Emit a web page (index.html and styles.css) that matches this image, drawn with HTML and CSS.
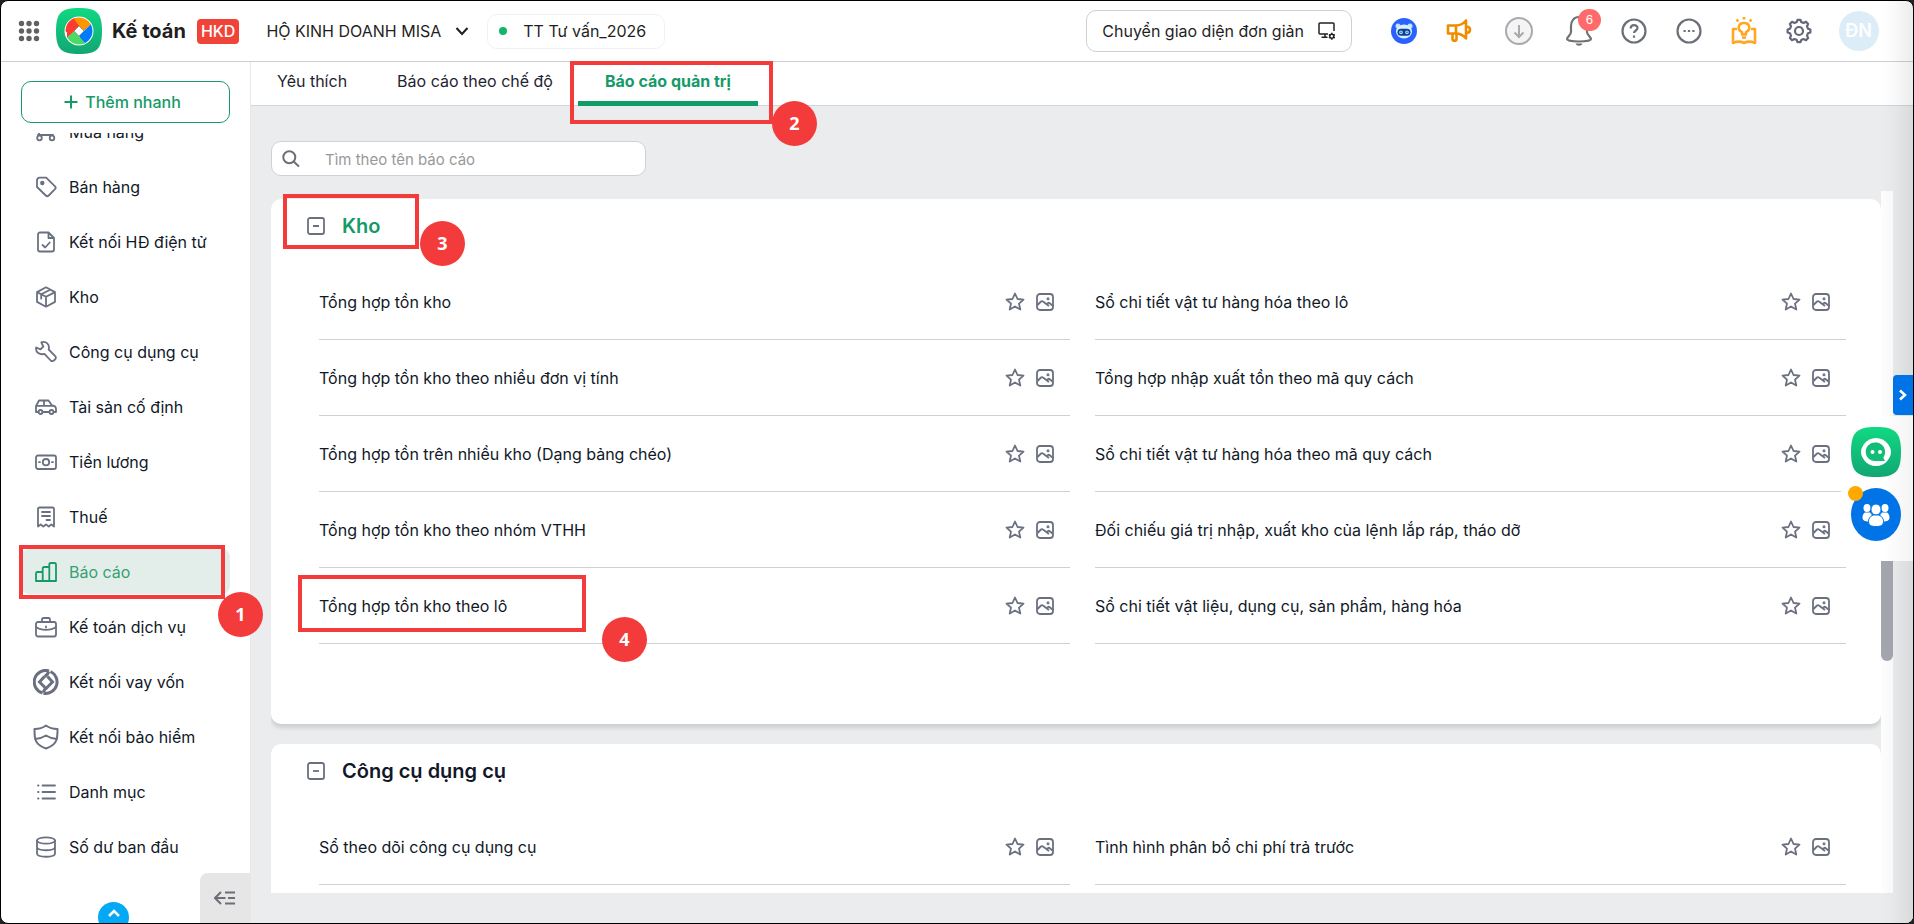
FILE: index.html
```html
<!DOCTYPE html>
<html lang="vi">

<head>
    <meta charset="utf-8">
    <meta name="viewport" content="width=device-width, initial-scale=1.0">
    <title>Báo cáo quản trị</title>
    <link rel="stylesheet" href="styles.css">
</head>

<body>

    <svg class="sprite" aria-hidden="true">
        <symbol id="i-star" viewBox="0 0 20 20">
            <path d="M10 1.500l2.500 5.500 6 .6-4.500 4 1.300 5.900-5.300-3-5.300 3L6 11.600l-4.500-4 6-.6z" />
        </symbol>
        <symbol id="i-image" viewBox="0 0 20 20">
            <rect x="2" y="2" width="16" height="16" rx="3" />
            <path d="M2.500 13l3.500-3.500c.7-.6 1.300-.6 2 0l6 4.500M11.500 12.200l1.300-1c.6-.5 1.300-.5 1.900 0l2.800 2.300" />
            <circle cx="13" cy="6.800" r=".6" />
        </symbol>
        <symbol id="i-minus" viewBox="0 0 18 18">
            <rect x="1" y="1" width="16" height="16" rx="2" />
            <path d="M6 9h6" />
        </symbol>
    </svg>

    <div class="app">
        <header class="topbar">
            <button class="apps" aria-label="Ứng dụng">
                <svg width="22" height="22" viewBox="0 0 22 22" fill="#616161">
                    <circle cx="3.500" cy="3.500" r="2.700" /><circle cx="11" cy="3.500" r="2.700" /><circle cx="18.500" cy="3.500" r="2.700" />
                    <circle cx="3.500" cy="11" r="2.700" /><circle cx="11" cy="11" r="2.700" /><circle cx="18.500" cy="11" r="2.700" />
                    <circle cx="3.500" cy="18.500" r="2.700" /><circle cx="11" cy="18.500" r="2.700" /><circle cx="18.500" cy="18.500" r="2.700" />
                </svg>
            </button>
            <svg class="logo" viewBox="0 0 46 46">
                <defs>
                    <linearGradient id="green" x1="0" y1="0" x2="0" y2="1">
                        <stop offset="0" stop-color="#10d982" />
                        <stop offset="1" stop-color="#12a673" />
                    </linearGradient>
                    <clipPath id="disc"><circle cx="23" cy="23" r="13.500" /></clipPath>
                </defs>
                <path d="M23 0c17 0 23 4 23 23s-6 23-23 23S0 42 0 23 6 0 23 0z" fill="url(#green)" />
                <circle cx="23" cy="23" r="14.500" fill="#fff" />
                <g clip-path="url(#disc)">
                    <path d="M23 18L11 30V8h6l6.500 6z" fill="#ff3b30" />
                    <path d="M28 23L14 9V5h26v6z" fill="#ff9500" />
                    <path d="M23 28L36 15h8v24H30l-4.500-6z" fill="#007aff" />
                    <path d="M18 23l14 15v5H6V34z" fill="#4cd964" />
                    <path d="M23 18l-9 9-5-4V8h7z" fill="#ff3b30" />
                </g>
                <path d="M23 18l5 5-5 5-5-5z" fill="#fff" stroke="#476" stroke-width=".6" />
            </svg>
            <strong class="product">Kế toán</strong>
            <span class="badge">HKD</span>
            <button class="company">
                HỘ KINH DOANH MISA
                <svg width="14" height="14" viewBox="0 0 14 14" fill="none" stroke="#1f1f1f" stroke-width="2"><path d="M1.500 4l5.500 6 5.500-6" /></svg>
            </button>
            <button class="database"><span class="dot"></span>TT Tư vấn_2026</button>

            <button class="switch">
                Chuyển giao diện đơn giản
                <svg width="18" height="18" viewBox="0 0 18 18" fill="none" stroke="#222" stroke-width="1.500">
                    <path d="M10 12H2c-.8 0-1-.4-1-1V2c0-.7.3-1 1-1h13c.7 0 1 .3 1 1v7M7 12v3M3.500 15.300h6" />
                    <circle cx="13.800" cy="14.200" r="2" />
                    <path d="M13.800 10.800v1.200M13.800 16.400v1.400M10.900 12.500l1 .6M15.700 15.300l1.100.6M10.900 15.900l1-.6M15.700 13.100l1.100-.6" />
                </svg>
            </button>

            <nav class="tools">
                <button aria-label="Trợ lý">
                    <svg width="26" height="26" viewBox="0 0 26 26">
                        <circle cx="13" cy="13" r="13" fill="#2962ff" />
                        <circle cx="7" cy="8" r="2.500" fill="#bfe6fb" /><circle cx="19" cy="8" r="2.500" fill="#bfe6fb" />
                        <ellipse cx="13" cy="13.500" rx="8" ry="7" fill="#d5f0fd" />
                        <rect x="6.500" y="10.800" width="13" height="7" rx="3.500" fill="#0f3f91" />
                        <circle cx="10" cy="14.300" r="1.300" fill="none" stroke="#9edcfa" stroke-width="1.200" /><circle cx="16" cy="14.300" r="1.300" fill="none" stroke="#9edcfa" stroke-width="1.200" />
                    </svg>
                </button>
                <button aria-label="Thông báo sản phẩm">
                    <svg width="26" height="26" viewBox="0 0 26 26" fill="none" stroke="#f08c00" stroke-width="2.600" stroke-linejoin="round">
                        <path d="M2 7.500h8v8H2zM10 7.500c4.500 0 7.500-2 10-5v18c-2.500-3-5.500-5-10-5M6.500 15.500v5.800c0 2 4 2 4 0v-5.800M21 8.500c4 .5 4 6 0 6.500" />
                    </svg>
                </button>
                <button class="wide" aria-label="Tải xuống">
                    <svg width="28" height="28" viewBox="0 0 28 28" fill="none" stroke="#aaa" stroke-width="2">
                        <circle cx="14" cy="14" r="13" fill="#f4f4f6" /><path d="M14 8v12M9.500 15.500L14 20l4.500-4.500" />
                    </svg>
                </button>
                <button class="bell" aria-label="Thông báo">
                    <svg width="28" height="32" viewBox="0 0 28 32" fill="none" stroke="#717171" stroke-width="2.200" stroke-linejoin="round">
                        <path d="M14 2C8.500 2 6 6.500 6 11v6c0 3-4 5-4 7 0 1.500 5 2.500 12 2.500S26 25.500 26 24c0-2-4-4-4-7v-6c0-4.500-2.500-9-8-9z" />
                        <path d="M10.500 28.500h7c-1 3-6 3-7 0z" fill="#717171" stroke="none" />
                    </svg>
                    <span class="count">6</span>
                </button>
                <button aria-label="Trợ giúp">
                    <svg width="26" height="26" viewBox="0 0 26 26" fill="none" stroke="#6b6f78" stroke-width="2.200">
                        <circle cx="13" cy="13" r="11.500" /><path d="M9.700 10.500c0-4.500 6.800-4.300 6.800-.4 0 2.400-3.500 2.400-3.500 5M13 17.500v2.300" />
                    </svg>
                </button>
                <button aria-label="Thêm">
                    <svg width="26" height="26" viewBox="0 0 26 26" fill="none" stroke="#6b6f78" stroke-width="2.200">
                        <circle cx="13" cy="13" r="11.500" /><path d="M7.500 13h2.200M11.900 13h2.200M16.300 13h2.200" />
                    </svg>
                </button>
                <button aria-label="Hướng dẫn">
                    <svg width="26" height="30" viewBox="0 0 26 30" fill="none" stroke="#ffa722" stroke-width="2.600" stroke-linejoin="round">
                        <path d="M6 13H2v14c4-1.800 7.500-1.800 11 0 3.500-1.800 7-1.800 11 0V13h-4" />
                        <path d="M11 18.500v-2.300c-5.500-3-3.500-9.200 2-9.200s7.500 6.200 2 9.200v2.300zM11 21.500h4M13 1v2.500M5.500 3.500l1.800 1.800M20.500 3.500l-1.800 1.800" />
                    </svg>
                </button>
                <button aria-label="Thiết lập">
                    <svg width="26" height="26" viewBox="0 0 26 26" fill="none" stroke="#63677a" stroke-width="2.200" stroke-linejoin="round">
                        <path d="M10.800 4L11.500 1.800h3L15.200 4l2.300 1 2.500-1.200 2.100 2.200-1.100 2.300 1 2.400 2.400.8v3l-2.400.8-1 2.300 1.100 2.400-2.100 2.200-2.500-1.200-2.300 1-.7 2.200h-3l-.7-2.200-2.300-1L6 22.200 3.900 20 5 17.600l-1-2.300-2.400-.8v-3l2.400-.8 1-2.400L3.900 6 6 3.800 8.500 5z" />
                        <circle cx="13" cy="13" r="4" />
                    </svg>
                </button>
                <button class="wide" aria-label="Tài khoản"><span class="avatar">ĐN</span></button>
            </nav>
        </header>

        <div class="body">
            <aside class="sidebar">
                <button class="quick_add">
                    <svg width="14" height="14" viewBox="0 0 14 14" fill="none" stroke="#159a68" stroke-width="2"><path d="M7 .5v13M.5 7h13" /></svg>
                    Thêm nhanh
                </button>
                <nav class="menu">
                    <ul>
                        <li><a href="#"><svg viewBox="0 0 22 22"><path d="M1 3h3v11H3M4 7h16M4 14h14M4 11h15" /><circle cx="4.500" cy="17" r="2.300" /><circle cx="17" cy="17" r="2.300" /></svg>Mua hàng</a></li>
                        <li><a href="#"><svg viewBox="0 0 22 22"><path d="M2 4.500C2 2.500 3 1.600 4.800 1.600h6.400L20 10.300c.9.9.9 1.900 0 2.800l-6.300 6.400c-.9.9-2 .9-2.900 0L2 11z" /><circle cx="7.300" cy="7" r="1.300" class="fill" /></svg>Bán hàng</a></li>
                        <li><a href="#"><svg viewBox="0 0 22 22"><path d="M13.500 1.500H5c-1.300 0-2 .7-2 2v15c0 1.300.7 2 2 2h12c1.300 0 2-.7 2-2V7zM13.500 1.500V7H19M7.500 14l2.700 2.500 4.500-5" /></svg>Kết nối HĐ điện tử</a></li>
                        <li><a href="#"><svg viewBox="0 0 22 22"><path d="M11 1.300l9 4.800v9.800l-9 4.800-9-4.800V6.100zM2 6.100l9 4.700 9-4.700M11 10.800v9.900M6.200 8.200l9-4.500M6.200 8.200v4.500" /></svg>Kho</a></li>
                        <li><a href="#"><svg viewBox="0 0 22 22"><path d="M1.200 6.500l4.300 1.800 2.800-2.800L6.300 1.300c4.700-1.500 8.700 2.200 7.400 7.200l6.500 6.700c2 2.300-2.300 6.400-4.500 4.300l-6.300-6.600c-4.700 1.400-9.200-1.700-8.200-6.400z" /></svg>Công cụ dụng cụ</a></li>
                        <li><a href="#"><svg viewBox="0 0 22 22"><path d="M3.500 16H1v-6l3-5.500h9.500L17 9.500c3 .3 4 1.500 4 3.500v3h-2M7.500 16h6.500M1 9.800h16M9 4.500v5" /><circle cx="5.500" cy="16" r="2" /><circle cx="16.500" cy="16" r="2" /></svg>Tài sản cố định</a></li>
                        <li><a href="#"><svg viewBox="0 0 22 22"><rect x="1" y="4.500" width="20" height="13.500" rx="2" /><circle cx="11" cy="11.200" r="3.200" /><path d="M4 11.200h1M17 11.200h1" /></svg>Tiền lương</a></li>
                        <li><a href="#"><svg viewBox="0 0 22 22"><path d="M3 20.500V3c0-1 .5-1.500 1.500-1.500h13c1 0 1.500.5 1.500 1.500v17.500l-2.700-2-2.600 2-2.700-2-2.700 2-2.600-2zM7 6h8M7 10h8M11.500 14H15" /></svg>Thuế</a></li>
                        <li><a href="#" class="active"><svg viewBox="0 0 22 22"><path d="M1 20v-7.500c0-1 .3-1.500 1.500-1.500H7.700V20zM7.700 20V7.500c0-1 .5-1.500 1.500-1.500h5.100v14zM14.300 20V3.500c0-1 .3-1.500 1.500-1.500h3.700c1 0 1.500.5 1.500 1.500V20zM1 20h20" /></svg>Báo cáo</a></li>
                        <li><a href="#"><svg viewBox="0 0 22 22"><rect x="1" y="6" width="20" height="14.500" rx="2" /><path d="M7 6V3.500C7 2.500 7.500 2 8.500 2h5c1 0 1.500.5 1.500 1.500V6M1 11c5 3.700 15 3.700 20 0M11 10.500v1" /></svg>Kế toán dịch vụ</a></li>
                        <li><a href="#"><svg class="big loan" viewBox="0 0 26 26"><path d="M16 1.900A11.500 11.500 0 1 0 9.500 24M17.500 2.500A11.500 11.500 0 0 1 10.500 24.200" /><path d="M11.500 7.500L6.500 13l5.500 5.500M14.500 7.500l5 5.500-5.500 5.500" /><path d="M15.500 2.500c-.5 3.500-2 4-4 5M10.500 23.500c.5-3.500 2-4 4-5" /></svg>Kết nối vay vốn</a></li>
                        <li><a href="#"><svg class="big" viewBox="0 0 26 26"><path d="M13 1.500c3 2.300 7 3.500 11.500 3.500 0 9 .5 15-11.500 19.500C1 20 1.500 14 1.500 5 6 5 10 3.800 13 1.500zM2 15c4-.3 8-1.500 11-3.500 3 2 7 3.200 11 3.500" /></svg>Kết nối bảo hiểm</a></li>
                        <li><a href="#"><svg viewBox="0 0 22 22"><path d="M3 4.500h.5M7.500 4.500H20M3 11h.5M7.500 11H20M3 17.500h.5M7.500 17.500H20" /></svg>Danh mục</a></li>
                        <li><a href="#"><svg viewBox="0 0 22 22"><ellipse cx="11" cy="4.500" rx="9" ry="3.200" /><path d="M2 4.500v13c0 4.300 18 4.300 18 0v-13M2 11c0 4.300 18 4.300 18 0" /></svg>Số dư ban đầu</a></li>
                    </ul>
                </nav>
                <button class="scroll_up" aria-label="Lên đầu">
                    <svg width="12" height="8" viewBox="0 0 12 8" fill="none" stroke="#fff" stroke-width="2.500"><path d="M1 7l5-5 5 5" /></svg>
                </button>
                <button class="collapse" aria-label="Thu gọn">
                    <svg width="22" height="14" viewBox="0 0 22 14" fill="none" stroke="#6b6f78" stroke-width="2"><path d="M7 1L1 7l6 6M1.500 7h10M14 7h7M11 1.500h10M11 12.500h10" /></svg>
                </button>
            </aside>

            <main class="main">
                <nav class="tabs">
                    <a href="#">Yêu thích</a>
                    <a href="#">Báo cáo theo chế độ</a>
                    <a href="#" class="tab_active">Báo cáo quản trị</a>
                </nav>

                <div class="content">
                    <label class="search">
                        <svg width="18" height="18" viewBox="0 0 18 18" fill="none" stroke="#6b6f78" stroke-width="2"><circle cx="7.300" cy="7.300" r="6" /><path d="M11.600 11.600l5.400 5" /></svg>
                        <input type="text" placeholder="Tìm theo tên báo cáo" aria-label="Tìm theo tên báo cáo">
                    </label>

                    <div class="scroller">
                        <div class="groups">
                            <section class="group">
                                <h2 class="green"><button aria-label="Thu gọn nhóm"><svg><use href="#i-minus" /></svg></button>Kho</h2>
                                <ul class="reports">
                                    <li><a href="#">Tổng hợp tồn kho</a></li>
                                    <li><a href="#">Sổ chi tiết vật tư hàng hóa theo lô</a></li>
                                    <li><a href="#">Tổng hợp tồn kho theo nhiều đơn vị tính</a></li>
                                    <li><a href="#">Tổng hợp nhập xuất tồn theo mã quy cách</a></li>
                                    <li><a href="#">Tổng hợp tồn trên nhiều kho (Dạng bảng chéo)</a></li>
                                    <li><a href="#">Sổ chi tiết vật tư hàng hóa theo mã quy cách</a></li>
                                    <li><a href="#">Tổng hợp tồn kho theo nhóm VTHH</a></li>
                                    <li><a href="#">Đối chiếu giá trị nhập, xuất kho của lệnh lắp ráp, tháo dỡ</a></li>
                                    <li><a href="#">Tổng hợp tồn kho theo lô</a></li>
                                    <li><a href="#">Sổ chi tiết vật liệu, dụng cụ, sản phẩm, hàng hóa</a></li>
                                </ul>
                            </section>
                            <section class="group">
                                <h2><button aria-label="Thu gọn nhóm"><svg><use href="#i-minus" /></svg></button>Công cụ dụng cụ</h2>
                                <ul class="reports">
                                    <li><a href="#">Sổ theo dõi công cụ dụng cụ</a></li>
                                    <li><a href="#">Tình hình phân bổ chi phí trả trước</a></li>
                                </ul>
                            </section>
                        </div>
                        <div class="track"><div class="thumb"></div></div>
                    </div>
                </div>
            </main>
        </div>

        <div class="edge_shadow"></div>
        <div class="dock"></div>
        <button class="expand" aria-label="Mở rộng">
            <svg width="8" height="12" viewBox="0 0 8 12" fill="none" stroke="#fff" stroke-width="2.500"><path d="M1 1.500L6 6l-5 4.500" /></svg>
        </button>
        <button class="chat" aria-label="Trò chuyện">
            <svg width="50" height="50" viewBox="0 0 50 50">
                <path d="M25 0c19 0 25 5 25 25s-6 25-25 25S0 45 0 25 6 0 25 0z" fill="url(#green)" />
                <path d="M25 11c5 0 9 2 12 6 1 2 3 4 3 8s-2 6-3 8c-3 4-7 6-12 6s-9-2-12-6c-1-2-3-4-3-8s2-6 3-8c3-4 7-6 12-6z" fill="#fff" />
                <path d="M25 15.500a9.300 9.300 0 1 0 0 18.500h9l-1.700-3.200C37 24 32 15.500 25 15.500z" fill="#12bd78" />
                <circle cx="21.500" cy="25" r="2" fill="#fff" /><circle cx="29" cy="25" r="2" fill="#fff" />
            </svg>
        </button>
        <button class="community" aria-label="Cộng đồng">
            <svg width="28" height="24" viewBox="0 0 28 24" fill="#fff">
                <ellipse cx="5" cy="5" rx="3.500" ry="4" /><ellipse cx="23" cy="5" rx="3.500" ry="4" />
                <path d="M3 9.500h5l2 2.500-3 6.500c-4 0-6.500-1-6.500-4 0-2.500 1-4 2.500-5zM25 9.500h-5L18 12l3 6.500c4 0 6.500-1 6.500-4 0-2.500-1-4-2.500-5z" />
                <g stroke="#0073e6" stroke-width="1">
                    <ellipse cx="14" cy="6.500" rx="5" ry="5.500" />
                    <path d="M11 12h6c3 1.500 4.500 3.500 4.500 6.500 0 4-3 5-7.500 5s-7.500-1-7.500-5c0-3 1.500-5 4.500-6.500z" />
                </g>
            </svg>
            <span></span>
        </button>

        <!-- guide steps over the screen -->
        <div class="mark mark1"></div><span class="step step1">1</span>
        <div class="mark mark2"></div><span class="step step2">2</span>
        <div class="mark mark3"></div><span class="step step3">3</span>
        <div class="mark mark4"></div><span class="step step4">4</span>
    </div>

    <script>
        // every report row gets the same two actions
        document.querySelectorAll(".reports li").forEach(row => {
            row.insertAdjacentHTML("beforeend",
                '<button aria-label="Yêu thích"><svg><use href="#i-star" /></svg></button>' +
                '<button aria-label="Xem mẫu"><svg><use href="#i-image" /></svg></button>');
        });
    </script>
</body>

</html>
```
FILE: styles.css
```css
* {
    box-sizing: border-box;
}

body {
    margin: 0;
    background-color: #222;
    font-family: Inter, "Noto Sans", sans-serif;
    font-size: 16px;
    color: #111827;
}

button {
    display: flex;
    align-items: center;
    justify-content: center;
    padding: 0;
    border: none;
    background: none;
    font: inherit;
    color: inherit;
    white-space: nowrap;
    cursor: pointer;
}

a {
    color: inherit;
    text-decoration: none;
}

ul {
    margin: 0;
    padding: 0;
    list-style: none;
}

svg {
    flex: none;
}

.sprite {
    display: none;
}

.app {
    position: relative;
    display: flex;
    flex-direction: column;
    height: 100vh;
    overflow: hidden;
    border: 1px solid #000;
    border-radius: 8px;
    background-color: #fff;
}

/* top bar */
.topbar {
    display: flex;
    align-items: center;
    height: 61px;
    padding: 0 22px 0 17px;
    border-bottom: 1px solid #cfcfd3;
    color: #1f1f1f;
}

.logo {
    width: 46px;
    height: 46px;
    margin: 0 10px 0 16px;
}

.product {
    font-size: 20px;
}

.badge {
    margin: 0 27px 0 11px;
    padding: 0 4px;
    border-radius: 4px;
    background-color: #f04438;
    color: #fff;
    font-weight: 500;
    line-height: 25px;
}

.company {
    gap: 14px;
}

.database {
    gap: 16px;
    height: 35px;
    margin-left: 18px;
    padding: 0 18px 0 11px;
    border: 1px solid #f1f1f3;
    border-radius: 10px;
}

.dot {
    width: 8px;
    height: 8px;
    border-radius: 50%;
    background-color: #12b76a;
}

.switch {
    gap: 14px;
    height: 42px;
    margin-left: auto;
    padding: 0 15px;
    border: 1px solid #cfcfd6;
    border-radius: 10px;
}

.tools {
    display: flex;
    margin-left: 24px;
}

.tools button {
    position: relative;
    width: 55px;
    height: 60px;
}

.tools .wide {
    width: 65px;
}

.count {
    position: absolute;
    top: 8px;
    left: 27px;
    width: 23px;
    border-radius: 12px;
    background-color: #ff6b6b;
    color: #fff;
    font-size: 12px;
    line-height: 22px;
}

.avatar {
    width: 40px;
    border-radius: 50%;
    background-color: #dcedf8;
    color: #fff;
    font-size: 18px;
    font-weight: 600;
    line-height: 40px;
}

.body {
    display: flex;
    flex: 1;
    min-height: 0;
}

/* sidebar */
.sidebar {
    position: relative;
    display: flex;
    flex-direction: column;
    width: 250px;
    padding: 19px 20px 0;
    border-right: 1px solid #e6e7e9;
}

.quick_add {
    gap: 7px;
    flex: none;
    height: 42px;
    margin-bottom: 10px;
    padding-right: 6px;
    border: 1px solid #159a68;
    border-radius: 10px;
    color: #159a68;
    font-weight: 500;
}

.menu {
    overflow: hidden;
}

/* the list is scrolled a little way down */
.menu ul {
    display: grid;
    gap: 10px;
    margin-top: -24px;
}

.menu a {
    display: flex;
    align-items: center;
    gap: 12px;
    height: 45px;
    padding-left: 14px;
    border-radius: 8px;
}

.menu svg {
    width: 22px;
    height: 22px;
    fill: none;
    stroke: #6b7080;
    stroke-width: 1.8;
    stroke-linejoin: round;
    stroke-linecap: round;
}

.menu .big {
    width: 26px;
    height: 26px;
    margin: 0 -2px;
    stroke-width: 2;
}

.menu .loan {
    stroke-width: 3;
    stroke-linecap: butt;
    stroke-linejoin: miter;
}

.menu .fill {
    fill: #6b7080;
}

.menu .active {
    background-color: #e3eeea;
    color: #35a173;
}

.menu .active svg {
    stroke: #159a68;
}

.scroll_up {
    position: absolute;
    left: 97px;
    bottom: -10px;
    width: 31px;
    height: 31px;
    padding-bottom: 9px;
    border-radius: 50%;
    background-color: #03a9f4;
}

.collapse {
    position: absolute;
    right: 0;
    bottom: 0;
    width: 50px;
    height: 50px;
    border-radius: 8px 0 0;
    background-color: #e6e6e6;
}

/* reports */
.main {
    display: flex;
    flex: 1;
    flex-direction: column;
    background-color: #ebecee;
}

.tabs {
    display: flex;
    height: 44px;
    padding-left: 1px;
    border-bottom: 1px solid #d3d5d9;
    background-color: #fff;
    color: #1f2430;
    line-height: 38px;
}

.tabs a {
    height: 44px;
    padding: 0 25px;
}

.tabs .tab_active {
    padding: 0 27px;
    border-bottom: 5px solid #0f9d67;
    color: #159a68;
    font-weight: 700;
}

.content {
    display: flex;
    flex: 1;
    flex-direction: column;
    min-height: 0;
    padding: 35px 20px 30px;
}

.search {
    display: flex;
    flex: none;
    align-items: center;
    gap: 23px;
    width: 375px;
    height: 35px;
    margin-bottom: 15px;
    padding: 0 10px;
    border: 1px solid #cfd1d6;
    border-radius: 10px;
    background-color: #fff;
}

.search input {
    flex: 1;
    padding-top: 3px;
    border: none;
    outline: none;
    background: none;
    font: inherit;
    font-size: 15px;
}

.search input::placeholder {
    color: #999;
}

.scroller {
    display: flex;
    flex: 1;
    min-height: 0;
    overflow: hidden;
}

.groups {
    flex: 1;
    padding-top: 8px;
}

.group {
    margin-bottom: 20px;
    padding: 0 35px 80px 48px;
    border-radius: 10px;
    background-color: #fff;
    box-shadow: 0 4px 4px rgba(0, 0, 0, 0.12);
}

.group h2 {
    display: flex;
    align-items: center;
    gap: 17px;
    height: 54px;
    margin: 0 0 11px -12px;
    font-size: 20px;
    font-weight: 600;
}

.group .green {
    color: #159a68;
}

.group svg {
    width: 18px;
    height: 18px;
    fill: none;
    stroke: #6b7080;
    stroke-width: 1.8;
    stroke-linejoin: round;
}

.reports {
    display: grid;
    grid-template-columns: 1fr 1fr;
    column-gap: 25px;
}

.reports li {
    display: flex;
    align-items: center;
    gap: 10px;
    height: 76px;
    padding-right: 15px;
    border-bottom: 1px solid #cfd1d5;
}

.reports a {
    flex: 1;
}

.reports svg {
    width: 20px;
    height: 20px;
}

.track {
    width: 12px;
    background-color: #fdfdfd;
}

.thumb {
    height: 160px;
    margin-top: 310px;
    border-radius: 6px;
    background-color: #a3a6af;
}

/* right edge */
.dock {
    position: absolute;
    top: 415px;
    right: 0;
    width: 72px;
    height: 145px;
    background: linear-gradient(to right, #fff 60%, #f3f3f3);
}

.edge_shadow {
    position: absolute;
    top: 0;
    right: 0;
    bottom: 0;
    width: 32px;
    background: linear-gradient(to right, rgba(0, 0, 0, 0), rgba(0, 0, 0, 0.02) 40%, rgba(0, 0, 0, 0.08));
    pointer-events: none;
}

.expand {
    position: absolute;
    top: 374px;
    right: 0;
    width: 20px;
    height: 40px;
    border-radius: 4px 0 0 4px;
    background-color: #0073e6;
}

.chat {
    position: absolute;
    top: 426px;
    right: 12px;
}

.community {
    position: absolute;
    top: 487px;
    right: 12px;
    width: 50px;
    height: 53px;
    border-radius: 50%;
    background-color: #0073e6;
}

.community span {
    position: absolute;
    top: -2px;
    left: -3px;
    width: 15px;
    height: 15px;
    border-radius: 50%;
    background-color: #ffa800;
}

/* guide steps */
.mark {
    position: absolute;
    border: 4px solid #f43b3b;
    pointer-events: none;
}

.step {
    position: absolute;
    width: 45px;
    border-radius: 50%;
    background-color: #f43b3b;
    color: #fff;
    font-family: "Open Sans", "Noto Sans", sans-serif;
    font-size: 18px;
    font-weight: 700;
    line-height: 45px;
    text-align: center;
}

.mark1 { top: 544px; left: 18px; width: 206px; height: 54px; }
.step1 { top: 591px; left: 217px; }
.mark2 { top: 60px; left: 569px; width: 203px; height: 63px; }
.step2 { top: 100px; left: 771px; }
.mark3 { top: 193px; left: 282px; width: 136px; height: 55px; }
.step3 { top: 220px; left: 419px; }
.mark4 { top: 574px; left: 297px; width: 288px; height: 57px; }
.step4 { top: 616px; left: 601px; }
```
